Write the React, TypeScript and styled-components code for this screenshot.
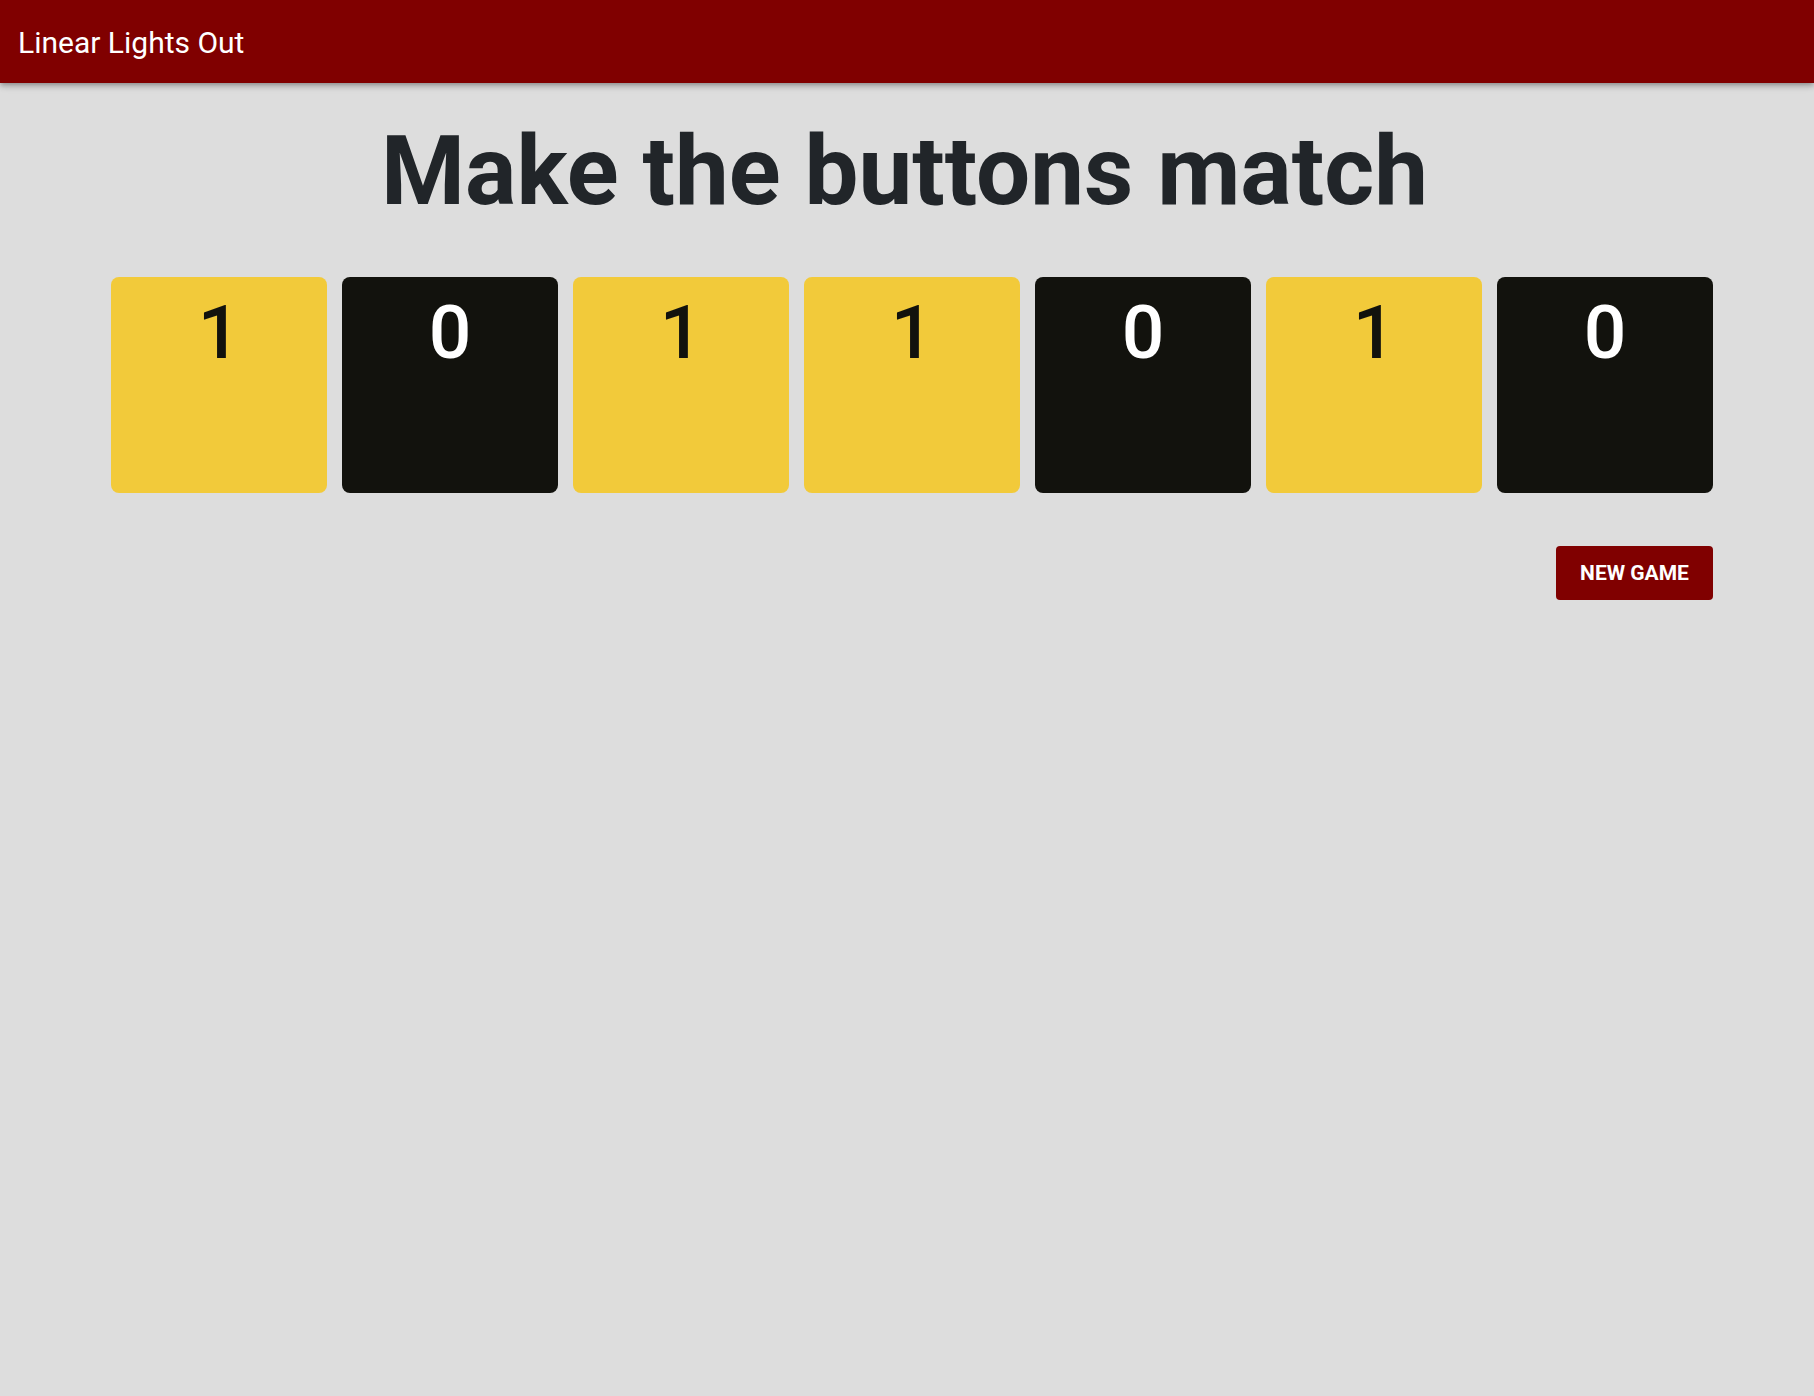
import styled, { createGlobalStyle } from 'styled-components';

const GlobalStyle = createGlobalStyle`
  html, body {
    margin: 0;
    padding: 0;
    background-color: #dddddd;
    font-family: Roboto, "Liberation Sans", sans-serif;
  }
`;

const AppBar = styled.header`
  display: flex;
  align-items: center;
  height: 83px;
  padding: 2px 18px 0;
  box-sizing: border-box;
  background-color: #800000;
  color: #ffffff;
  box-shadow: 0px 2px 4px -1px rgba(0, 0, 0, 0.2), 0px 4px 5px 0px rgba(0, 0, 0, 0.14),
    0px 1px 10px 0px rgba(0, 0, 0, 0.12);
`;

const AppTitle = styled.h1`
  margin: 0;
  font-size: 30px;
  font-weight: 400;
  line-height: 1;
`;

const Main = styled.main`
  display: flex;
  flex-direction: column;
  align-items: center;
  padding: 31px 0 0 10px;
`;

const Heading = styled.h2`
  margin: 0 15px 48px 0;
  font-size: 96px;
  font-weight: 700;
  line-height: 1.2;
  color: #212529;
`;

const Board = styled.div`
  display: grid;
  grid-template-columns: repeat(7, 216px);
  gap: 15px;
`;

type TileProps = {
  $on: boolean;
};

const Tile = styled.button<TileProps>`
  display: flex;
  justify-content: center;
  align-items: flex-start;
  width: 216px;
  height: 216px;
  padding: 18px 0 0;
  border: none;
  border-radius: 8px;
  background-color: ${(props) => (props.$on ? '#f2ca3a' : '#12120d')};
  color: ${(props) => (props.$on ? '#12120d' : '#ffffff')};
  font-family: Roboto, "Liberation Sans", sans-serif;
  font-size: 75px;
  font-weight: 500;
  line-height: 1;
  cursor: pointer;
`;

const Actions = styled.div`
  display: flex;
  justify-content: flex-end;
  width: 100%;
  margin-top: 53px;
`;

const NewGameButton = styled.button`
  width: 157px;
  height: 54px;
  border: none;
  border-radius: 4px;
  background-color: #800000;
  color: #ffffff;
  font-family: Roboto, "Liberation Sans", sans-serif;
  font-size: 21px;
  font-weight: 700;
  text-transform: uppercase;
  cursor: pointer;
`;

const lights = [1, 0, 1, 1, 0, 1, 0];

export default function App() {
  return (
    <>
      <GlobalStyle />
      <AppBar>
        <AppTitle>Linear Lights Out</AppTitle>
      </AppBar>
      <Main>
        <Heading>Make the buttons match</Heading>
        <div>
          <Board>
            {lights.map((v, i) => (
              <Tile key={i} $on={v === 1}>
                {v}
              </Tile>
            ))}
          </Board>
          <Actions>
            <NewGameButton>New Game</NewGameButton>
          </Actions>
        </div>
      </Main>
    </>
  );
}
